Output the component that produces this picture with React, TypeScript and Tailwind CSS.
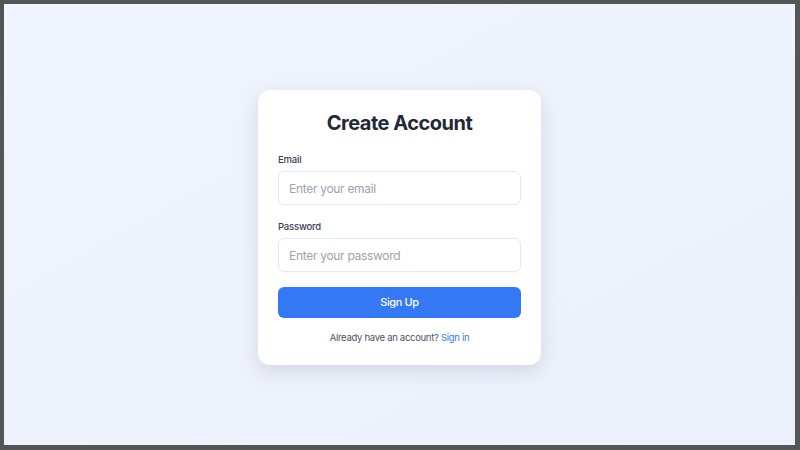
const App = () => {
  return (
    <div className="h-[450px] w-[800px] border-l-4 border-t-4 border-r-[5px] border-b-[5px] border-[#555555] bg-gradient-to-br from-[#f1f5fe] to-[#ecf0fa] font-['Inter',sans-serif]">
      <div className="flex h-full w-full items-center justify-center pt-[6px]">
        <div className="w-[283px] rounded-xl bg-white px-5 pt-[19px] pb-5 shadow-[0_6px_20px_rgba(100,116,160,0.22)]">
          <h1 className="text-center text-[20px] font-bold leading-7 tracking-tight text-[#1f2937]">
            Create Account
          </h1>

          <form className="mt-4" onSubmit={(e) => e.preventDefault()}>
            <label className="mb-[4px] block text-[9.5px] font-medium leading-[14px] tracking-[-0.2px] text-[#374151]">
              Email
            </label>
            <input
              type="email"
              placeholder="Enter your email"
              className="block h-[34px] w-full rounded-md border border-[#e2e8f6] px-[10px] text-[12px] tracking-[-0.3px] text-[#374151] outline-none placeholder:text-[#9ca3af]"
            />

            <label className="mt-[15px] mb-[4px] block text-[9.5px] font-medium leading-[14px] tracking-[-0.2px] text-[#374151]">
              Password
            </label>
            <input
              type="password"
              placeholder="Enter your password"
              className="block h-[34px] w-full rounded-md border border-[#e2e8f6] px-[10px] text-[12px] tracking-[-0.3px] text-[#374151] outline-none placeholder:text-[#9ca3af]"
            />

            <button
              type="submit"
              className="mt-[15px] block h-[31px] w-full rounded-md bg-[#3478f6] text-[11px] font-medium tracking-[-0.4px] text-white"
            >
              Sign Up
            </button>
          </form>

          <p className="mt-[13px] text-center text-[9.5px] leading-[14px] tracking-[-0.3px] text-[#4b5563]">
            Already have an account?{" "}
            <a href="#" className="text-[#3478f6]">
              Sign in
            </a>
          </p>
        </div>
      </div>
    </div>
  );
};

export default App;
